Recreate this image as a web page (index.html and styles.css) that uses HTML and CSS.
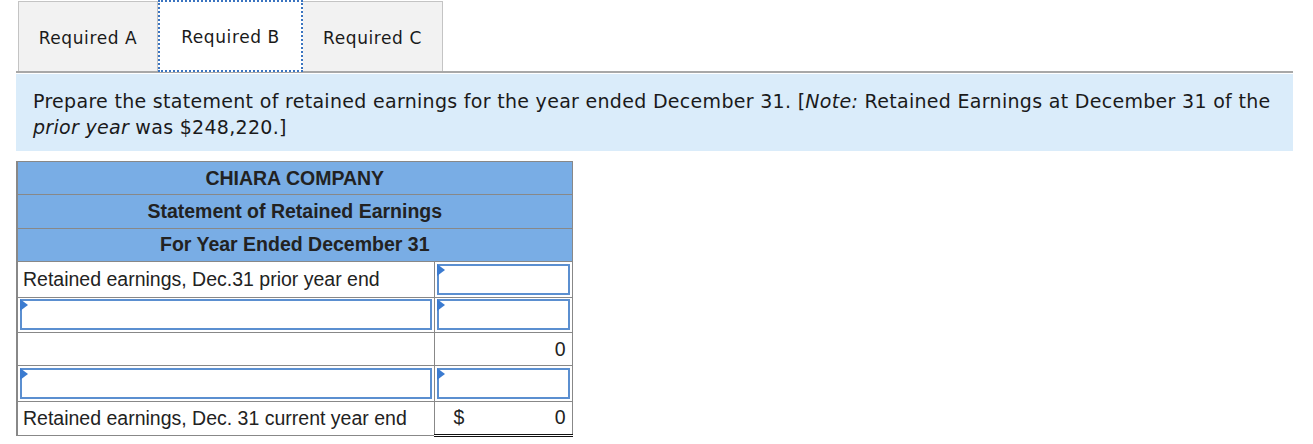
FILE: index.html
```html
<!DOCTYPE html>
<html>
<head>
<meta charset="utf-8">
<link rel="stylesheet" href="styles.css">
</head>
<body>
<div class="tabs">
  <div class="tab">Required A</div>
  <div class="tab active">Required B</div>
  <div class="tab">Required C</div>
</div>
<div class="note">Prepare the statement of retained earnings for the year ended December 31. [<i>Note:</i> Retained Earnings at December 31 of the <i>prior year</i> was $248,220.]</div>
<table class="stmt">
  <colgroup><col class="c1"><col class="c2"></colgroup>
  <tr class="hd"><td colspan="2">CHIARA COMPANY</td></tr>
  <tr class="hd"><td colspan="2">Statement of Retained Earnings</td></tr>
  <tr class="hd"><td colspan="2">For Year Ended December 31</td></tr>
  <tr><td class="lbl">Retained earnings, Dec.31 prior year end</td><td class="inp"><div class="box"><span class="tri"></span></div></td></tr>
  <tr><td class="inp"><div class="box"><span class="tri"></span></div></td><td class="inp"><div class="box"><span class="tri"></span></div></td></tr>
  <tr><td class="lbl"></td><td class="num top">0</td></tr>
  <tr><td class="inp"><div class="box"><span class="tri"></span></div></td><td class="inp"><div class="box"><span class="tri"></span></div></td></tr>
  <tr><td class="lbl">Retained earnings, Dec. 31 current year end</td><td class="num top total"><span class="cur">$</span><span>0</span></td></tr>
</table>
</body>
</html>
```
FILE: styles.css
```css
body {
  margin: 0;
  background: #fff;
  font-family: "DejaVu Sans", Verdana, sans-serif;
  color: #1a1a1a;
}
.tabs {
  display: flex;
  margin: 1px 20px 0 16px;
  padding-left: 2px;
  border-bottom: 2px solid #a8a8a8;
  height: 70px;
}
.tab {
  box-sizing: border-box;
  width: 140px;
  height: 70px;
  background: #f2f2f2;
  border: 1px solid #c4c4c4;
  border-bottom: none;
  display: flex;
  align-items: center;
  justify-content: center;
  font-size: 17px;
  letter-spacing: 0.6px;
  padding-top: 2px;
}
.tab + .tab { border-left: none; }
.tab.active {
  background: #fff;
  border: 2px dotted #3a74c0;
  width: 145px;
  height: 72px;
  margin-top: -1px;
}
.note {
  margin: 1px 20px 0 16px;
  background: #daecfa;
  padding: 14px 20px 17px 17px;
  font-size: 19px;
  letter-spacing: 0.3px;
  line-height: 26px;
  height: 46px;
}
.stmt {
  margin: 10px 0 0 16px;
  border-collapse: collapse;
  table-layout: fixed;
  width: 555px;
  font-family: "Liberation Sans", Arial, sans-serif;
  font-size: 19.5px;
  color: #222;
  border-left: 2px solid #888;
}
.c1 { width: 417px; }
.c2 { width: 138px; }
.stmt td {
  border: 1px solid #888;
  padding: 0;
  height: 32.4px;
}
.hd td {
  background: #79ade5;
  font-weight: bold;
  text-align: center;
  color: #222;
}
.lbl {
  padding-left: 5px !important;
}
.num {
  text-align: right;
  padding-right: 6px !important;
}
.num.top { border-top: 1.5px solid #111 !important; }
.total {
  border-bottom: 3px double #111 !important;
}
.cur { float: left; padding-left: 19px; }
.inp { padding: 1px 2px !important; }
.box {
  position: relative;
  box-sizing: border-box;
  height: 31px;
  border: 2px solid #5b8fd0;
  background: #fff;
}
.tri {
  position: absolute;
  left: -2px;
  top: -2px;
  width: 0;
  height: 0;
  border-top: 6px solid transparent;
  border-bottom: 6px solid transparent;
  border-left: 8px solid #3b7bd0;
}
```
